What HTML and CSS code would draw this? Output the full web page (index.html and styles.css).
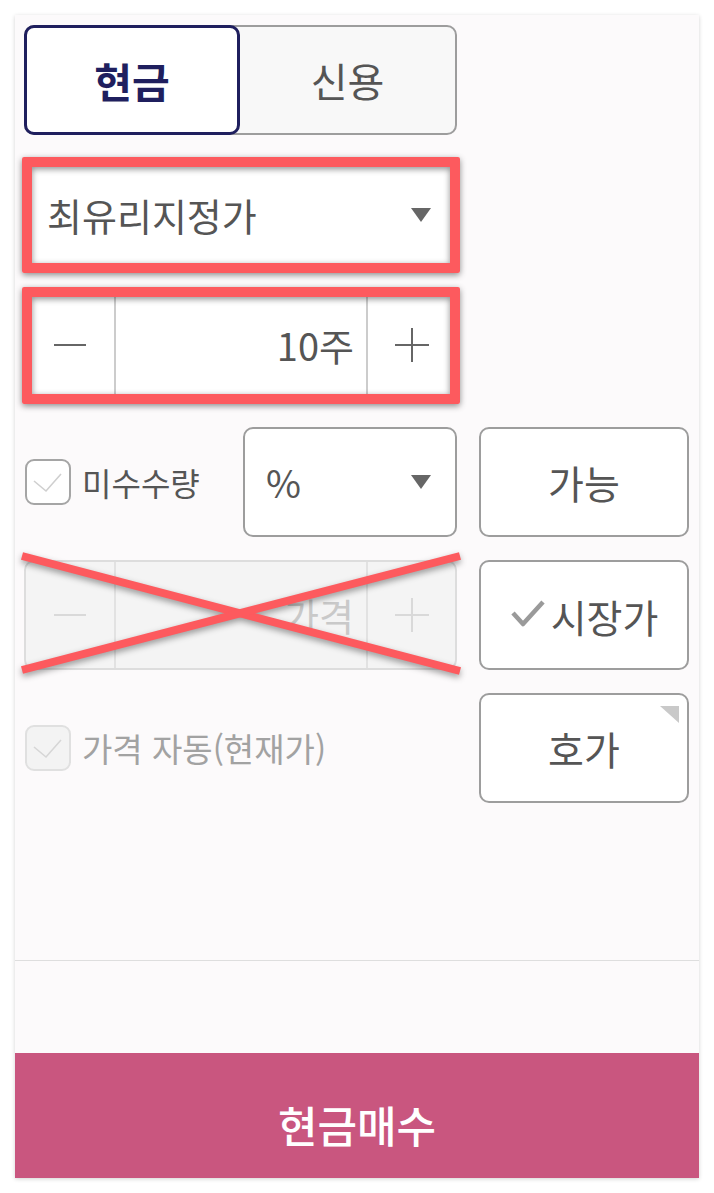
FILE: index.html
```html
<!DOCTYPE html>
<html lang="ko">
<head>
<meta charset="utf-8">
<title>주문</title>
<link rel="stylesheet" href="styles.css">
</head>
<body>
<div class="panel">
  <div class="content">
    <div class="tabs">
      <div class="tab active">현금</div>
      <div class="tab">신용</div>
    </div>

    <div class="select order-type">
      <span>최유리지정가</span>
      <span class="caret"></span>
      <div class="hl"></div>
    </div>

    <div class="stepper qty">
      <div class="step-btn"><svg width="32" height="4" viewBox="0 0 32 4"><line x1="0" y1="2" x2="32" y2="2" stroke="currentColor" stroke-width="2"/></svg></div>
      <div class="step-val">10주</div>
      <div class="step-btn"><svg width="34" height="34" viewBox="0 0 34 34"><line x1="0" y1="17" x2="34" y2="17" stroke="currentColor" stroke-width="2"/><line x1="17" y1="0" x2="17" y2="34" stroke="currentColor" stroke-width="2"/></svg></div>
      <div class="hl hl-step"></div>
    </div>

    <div class="row first">
      <div class="left split">
        <div class="check">
          <span class="box"><svg width="42" height="42" viewBox="0 0 42 42"><path d="M7 20 L19 30 L34 13" fill="none" stroke="#cfcfcf" stroke-width="1.6"/></svg></span>
          <span>미수수량</span>
        </div>
        <div class="select pct">
          <span>%</span>
          <span class="caret"></span>
        </div>
      </div>
      <div class="btn">가능</div>
    </div>

    <div class="row">
      <div class="left struck">
        <div class="stepper disabled">
          <div class="step-btn"><svg width="32" height="4" viewBox="0 0 32 4"><line x1="0" y1="2" x2="32" y2="2" stroke="currentColor" stroke-width="2"/></svg></div>
          <div class="step-val">가격</div>
          <div class="step-btn"><svg width="34" height="34" viewBox="0 0 34 34"><line x1="0" y1="17" x2="34" y2="17" stroke="currentColor" stroke-width="2"/><line x1="17" y1="0" x2="17" y2="34" stroke="currentColor" stroke-width="2"/></svg></div>
        </div>
        <svg class="xmark" width="438" height="130" viewBox="0 0 438 130"><line x1="0" y1="6" x2="438" y2="121" stroke="#fd5a5e" stroke-width="8"/><line x1="0" y1="120" x2="438" y2="6" stroke="#fd5a5e" stroke-width="8"/></svg>
      </div>
      <div class="btn market"><svg width="36" height="30" viewBox="0 0 36 30"><path d="M3 14 L13 25 L33 3" fill="none" stroke="#9a9a9a" stroke-width="4.5" stroke-linejoin="round"/></svg><span>시장가</span></div>
    </div>

    <div class="row">
      <div class="left">
        <div class="check disabled">
          <span class="box"><svg width="42" height="42" viewBox="0 0 42 42"><path d="M7 20 L19 30 L34 13" fill="none" stroke="#d6d6d6" stroke-width="1.6"/></svg></span>
          <span>가격 자동(현재가)</span>
        </div>
      </div>
      <div class="btn corner">호가</div>
    </div>
  </div>
  <div class="divider"></div>
  <div class="spacer"></div>
  <div class="buy">현금매수</div>
</div>
</body>
</html>
```

FILE: styles.css
```css
* { box-sizing: border-box; }

body {
  margin: 0;
  background: #ffffff;
  font-family: "Noto Sans CJK KR", "Noto Sans", sans-serif;
}

.panel {
  margin: 15px;
  width: 684px;
  height: 1163px;
  background: #fcfafb;
  box-shadow: 0 1px 4px rgba(0, 0, 0, 0.18);
  display: flex;
  flex-direction: column;
}

.content {
  flex: 1;
  padding: 10px 10px 0 9px;
  display: flex;
  flex-direction: column;
}

/* tabs */
.tabs {
  width: 433px;
  height: 110px;
  display: grid;
  grid-template-columns: 214px 1fr;
  border: 2px solid #9d9d9d;
  border-radius: 10px;
  background: #f8f8f8;
}

.tab {
  display: flex;
  align-items: center;
  justify-content: center;
  font-size: 40px;
  line-height: 1;
  color: #555555;
}

.tab.active {
  margin: -2px 0 -2px -2px;
  border: 3px solid #1f1f5e;
  border-radius: 10px;
  background: #ffffff;
  font-size: 41px;
  font-weight: 700;
  color: #1f1f5e;
}

/* select */
.select {
  position: relative;
  width: 433px;
  height: 110px;
  background: #ffffff;
  border: 2px solid #9d9d9d;
  border-radius: 10px;
  display: flex;
  align-items: center;
  justify-content: space-between;
  padding: 0 24px 0 21px;
  font-size: 38px;
  line-height: 1;
  color: #555555;
}

.order-type { margin-top: 25px; }

.caret {
  width: 0;
  height: 0;
  border-left: 10px solid transparent;
  border-right: 10px solid transparent;
  border-top: 14px solid #666666;
}

/* highlight annotation */
.hl {
  position: absolute;
  top: -5px;
  left: -4px;
  right: -5px;
  bottom: -5px;
  border: 10px solid #fd5a5e;
  border-radius: 2px;
  box-shadow: 0 2px 6px rgba(0, 0, 0, 0.45), inset 0 2px 6px rgba(0, 0, 0, 0.45);
  pointer-events: none;
}

.hl-step { bottom: -6px; }

/* stepper */
.stepper {
  position: relative;
  width: 433px;
  height: 110px;
  background: #ffffff;
  border: 2px solid #9d9d9d;
  border-radius: 10px;
  display: grid;
  grid-template-columns: 88px 1fr 87px;
  color: #555555;
}

.qty { margin-top: 20px; }

.step-btn {
  display: flex;
  align-items: center;
  justify-content: center;
  color: #666666;
}

.step-val {
  border-left: 2px solid #cccccc;
  border-right: 2px solid #cccccc;
  display: flex;
  align-items: center;
  justify-content: flex-end;
  padding-right: 12px;
  font-size: 38px;
  line-height: 1;
}

.stepper.disabled {
  background: #f4f4f4;
  border-color: #dddddd;
  color: #c9c9c9;
}

.stepper.disabled .step-btn { color: #d9d9d9; }
.stepper.disabled .step-val { border-color: #e2e2e2; }

/* rows */
.row {
  display: flex;
  gap: 22px;
  height: 110px;
  margin-top: 23px;
}

.row.first { margin-top: 27px; }

.left {
  width: 433px;
  display: flex;
  align-items: center;
  position: relative;
}

.split .check { flex: 1; }
.pct { width: 214px; height: 110px; }

.check {
  display: flex;
  align-items: center;
  gap: 11px;
  padding-left: 1px;
  font-size: 32px;
  line-height: 1;
  color: #555555;
}

.box {
  width: 46px;
  height: 46px;
  border: 2px solid #a5a5a5;
  border-radius: 9px;
  background: #ffffff;
  display: block;
  flex: none;
}

.box svg { display: block; }

.check.disabled { color: #a2a2a2; font-size: 33px; }
.check.disabled .box {
  border-color: #e0e0e0;
  background: #f3f3f3;
}

.struck .stepper { margin: 0; }

.xmark {
  position: absolute;
  left: -2px;
  top: -10px;
  overflow: visible;
  filter: drop-shadow(0 3px 3px rgba(0, 0, 0, 0.38));
}

/* right buttons */
.btn {
  position: relative;
  width: 210px;
  height: 110px;
  border: 2px solid #9d9d9d;
  border-radius: 10px;
  background: #ffffff;
  display: flex;
  align-items: center;
  justify-content: center;
  font-size: 39px;
  line-height: 1;
  color: #555555;
}

.market { gap: 5px; padding-top: 2px; }
.market svg { margin-top: -4px; }

.corner::after {
  content: "";
  position: absolute;
  top: 11px;
  right: 8px;
  width: 0;
  height: 0;
  border-top: 17px solid #c9c9c9;
  border-left: 19px solid transparent;
}

/* bottom */
.divider {
  height: 1px;
  background: #dedede;
}

.spacer { height: 92px; }

.buy {
  height: 125px;
  background: #c9567f;
  color: #ffffff;
  display: flex;
  align-items: center;
  justify-content: center;
  padding-top: 18px;
  font-size: 43px;
  font-weight: 500;
  line-height: 1;
}
```
